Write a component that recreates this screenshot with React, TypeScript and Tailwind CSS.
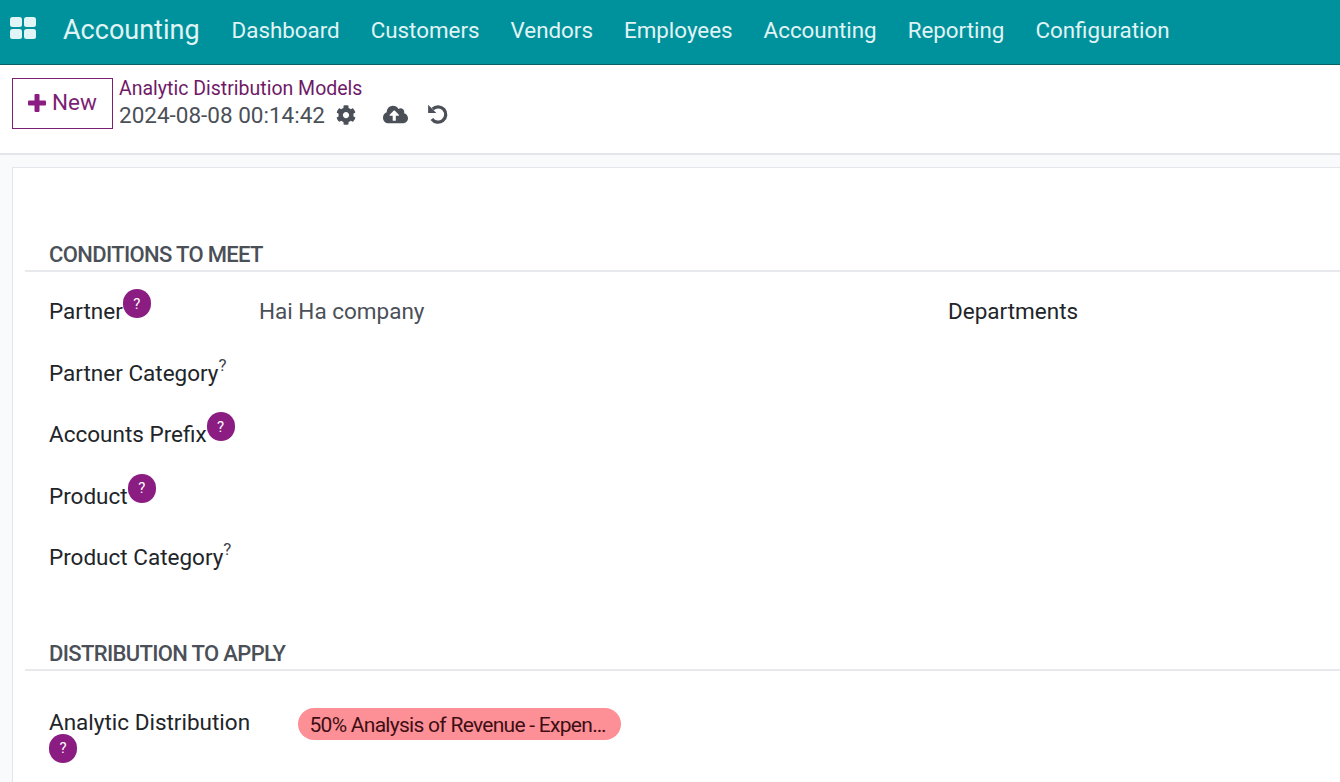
import { FaCog, FaCloudUploadAlt } from "react-icons/fa";

const menuItems = ["Dashboard", "Customers", "Vendors", "Employees", "Accounting", "Reporting", "Configuration"];

const HelpBadge = ({ className = "" }: { className?: string }) => (
  <span className={"inline-flex items-center justify-center w-[28px] h-[29px] rounded-full bg-[#8a1c82] text-white text-[15px] " + className}>
    ?
  </span>
);

const Label = ({ text, badge }: { text: string; badge: boolean }) => (
  <div className="flex items-start h-[61.5px] text-[#212529] text-[22.5px] leading-[30px]">
    <span>{text}</span>
    {badge ? (
      <HelpBadge className="mt-[-7px]" />
    ) : (
      <span className="text-[17px] leading-[18px] text-[#3f444b] mt-[-2px]">?</span>
    )}
  </div>
);

const SectionTitle = ({ text }: { text: string }) => (
  <div className="ml-[12px] border-b-2 border-[#e7e9ed] pl-[24px] pt-[2px] h-[34px] text-[22px] leading-[30px] font-medium text-[#4b5058] tracking-[-0.65px]">
    {text}
  </div>
);

export default function App() {
  return (
    <div className="w-[1340px] h-[782px] overflow-hidden bg-[#f9fafb] font-['Roboto',sans-serif]">
      <header className="h-[65px] bg-[#00929c] border-b border-[#0b5f66] flex items-center text-[#e0f4f5]">
        <svg width="26" height="22" viewBox="0 0 26 22" className="ml-[10px] mb-[8px]" fill="#e2f5f6">
          <rect x="0" y="0" width="12" height="10" rx="2.5" />
          <rect x="14" y="0" width="12" height="10" rx="2.5" />
          <rect x="0" y="12" width="12" height="10" rx="2.5" />
          <rect x="14" y="12" width="12" height="10" rx="2.5" />
        </svg>
        <span className="ml-[27px] text-[27px] leading-none mb-[3px]">Accounting</span>
        <nav className="flex ml-[32px] gap-[31px] text-[22.37px] leading-none mb-[4px]">
          {menuItems.map((item) => (
            <span key={item}>{item}</span>
          ))}
        </nav>
      </header>

      <div className="h-[90px] bg-white border-b-2 border-[#e3e5ea] flex items-start pt-[13px] pl-[12px]">
        <button className="w-[101px] h-[51px] border border-[#7c1f75] flex items-center justify-center gap-[6px] pb-[2px] text-[#7c1f75] text-[22.5px]">
          <svg width="18" height="18" viewBox="0 0 18 18" fill="#8a1c82">
            <rect x="6.5" y="0" width="5" height="18" rx="1" />
            <rect x="0" y="6.5" width="18" height="5" rx="1" />
          </svg>
          New
        </button>
        <div className="ml-[6px]">
          <div className="text-[#6f1a68] text-[19.5px] leading-[21px]">Analytic Distribution Models</div>
          <div className="flex items-center mt-[1px] text-[#4b5058] text-[22.5px] leading-[30px]">
            <span>2024-08-08 00:14:42</span>
            <FaCog className="ml-[11px] text-[20px]" />
            <FaCloudUploadAlt className="ml-[27px] mb-[2px] text-[25px]" />
            <svg width="22" height="22" viewBox="0 0 20 20" className="ml-[19px] mb-[2px]" fill="none">
              <path d="M5.2 5.4A7 7 0 1 1 4.4 14.6" stroke="#4b5058" strokeWidth="3" />
              <path d="M1 1.5V9H8.5Z" fill="#4b5058" />
            </svg>
          </div>
        </div>
      </div>

      <main className="ml-[12px] mt-[12px] h-[620px] bg-white border-l border-t border-[#e3e5ea] pt-[70px]">
        <SectionTitle text="CONDITIONS TO MEET" />
        <div className="flex pl-[36px] pt-[24px]">
          <div className="w-[210px]">
            <Label text="Partner" badge />
            <Label text="Partner Category" badge={false} />
            <Label text="Accounts Prefix" badge />
            <Label text="Product" badge />
            <Label text="Product Category" badge={false} />
          </div>
          <div className="w-[689px] text-[#4b5058] text-[22.5px] leading-[30px]">Hai Ha company</div>
          <div className="text-[#212529] text-[22.5px] leading-[30px]">Departments</div>
        </div>

        <div className="mt-[33px]">
          <SectionTitle text="DISTRIBUTION TO APPLY" />
        </div>
        <div className="flex pl-[36px] pt-[36px]">
          <div className="w-[249px] flex flex-col items-start text-[#212529] text-[22.5px] leading-[30px]">
            <div>Analytic Distribution</div>
            <HelpBadge className="mt-[-3px]" />
          </div>
          <div className="h-[32px] w-[323px] rounded-full bg-[#fd8f97] text-[#3d0f14] text-[21px] leading-[34px] pl-[11.5px] mt-[1px] whitespace-nowrap tracking-[-0.72px]">
            50% Analysis of Revenue - Expen…
          </div>
        </div>
      </main>
    </div>
  );
}
